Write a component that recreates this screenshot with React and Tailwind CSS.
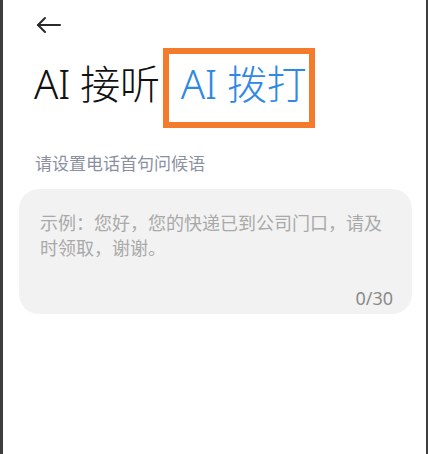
import React from 'react';

const BackArrow = () => (
  <svg width="26" height="18" viewBox="0 0 26 18" fill="none" stroke="#2a2a2a" strokeWidth="2" strokeLinecap="round" strokeLinejoin="round">
    <path d="M24 9H2" />
    <path d="M9 2L2 9l7 7" />
  </svg>
);

const App = () => {
  return (
    <div className="flex w-[428px] h-[454px] bg-white overflow-hidden font-['Noto_Sans','Noto_Sans_CJK_SC',sans-serif]">
      <div className="w-[3px] shrink-0 bg-[#3d3d3d]" />
      <div className="flex-1 flex flex-col">
        {/* header */}
        <div className="pl-[33px] pt-[16px] h-[45px]">
          <BackArrow />
        </div>

        {/* tabs */}
        <div className="flex items-center pl-[31px] h-[80px] mt-[3px]">
          <span className="mb-[8px] text-[40px] leading-none font-light text-[#111] tracking-[-0.3px]">AI 接听</span>
          <div className="ml-[3px] w-[152px] h-[80px] border-[6px] border-[#f47a2c] flex items-center pl-[12px] pb-[8px]">
            <span className="text-[40px] leading-none font-light text-[#2f88e3] tracking-[-0.3px]">AI 拨打</span>
          </div>
        </div>

        {/* greeting */}
        <div className="pl-[32px] mt-[25px] text-[17px] leading-[22px] text-[#8b90a0]">
          请设置电话首句问候语
        </div>

        <div className="ml-[16px] mr-[14px] mt-[14px] h-[125px] rounded-[20px] bg-[#f2f2f2] flex flex-col justify-between pt-[22px] pb-[6px] pl-[21px] pr-[19px]">
          <p className="text-[18px] leading-[25px] text-[#a9a9a9]">
            示例：您好，您的快递已到公司门口，请及时领取，谢谢。
          </p>
          <div className="text-right text-[18px] leading-[20px] text-[#8a8a8a]">0/30</div>
        </div>
      </div>
      <div className="w-[2px] shrink-0 bg-[#3d3d3d]" />
    </div>
  );
};

export default App;
